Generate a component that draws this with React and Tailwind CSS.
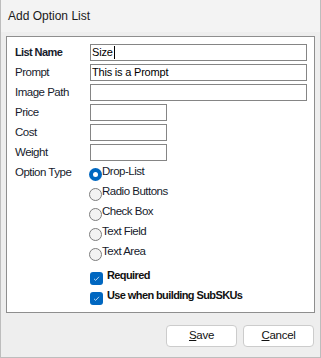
const font = { fontFamily: '"Liberation Sans", Arial, sans-serif' };

function Field({ label, value, wide, strong, cursor }) {
  return (
    <div className="flex h-[20px] items-start">
      <span
        className={`w-[75px] leading-[17px] text-[#161b2c] ${
          strong ? "text-[11px] font-bold tracking-[-0.6px]" : "text-[11.5px] tracking-[-0.5px]"
        }`}
      >
        {label}
      </span>
      <div
        className={`flex h-[17px] items-center border border-[#858585] bg-white pl-[1px] text-[11px] text-black ${
          wide ? "w-[217px]" : "w-[77px]"
        }`}
      >
        <span className="tracking-[-0.2px]">{value}</span>
        {cursor && <span className="ml-[1px] h-[13px] w-[1px] bg-black" />}
      </div>
    </div>
  );
}

function Radio({ label, checked }) {
  return (
    <div className="flex h-[20px] items-start">
      {checked ? (
        <span className="mt-[4px] grid h-[13px] w-[13px] place-items-center rounded-full bg-[#0067c0]">
          <span className="h-[5px] w-[5px] rounded-full bg-white" />
        </span>
      ) : (
        <span className="mt-[4px] h-[13px] w-[13px] rounded-full border border-[#7d7d7d] bg-[#f2f2f2]" />
      )}
      <span className="text-[11.5px] leading-[15px] tracking-[-0.5px] text-[#161b2c]">{label}</span>
    </div>
  );
}

function Check({ label }) {
  return (
    <div className="flex h-[20px] items-start">
      <span className="mt-[1px] grid h-[13px] w-[13px] place-items-center rounded-[3px] bg-[#0067c0]">
        <svg width="9" height="9" viewBox="0 0 9 9">
          <path d="M2 4.8 L3.7 6.4 L7 2.8" fill="none" stroke="#cfe3f5" strokeWidth="0.9" />
        </svg>
      </span>
      <span className="ml-[4px] text-[11px] font-bold leading-[9px] tracking-[-0.6px] text-[#111]">
        {label}
      </span>
    </div>
  );
}

export default function App() {
  return (
    <div
      className="flex h-[358px] w-[321px] flex-col border-x border-b border-[#bdbdbd] bg-[#eeeeee]"
      style={font}
    >
      <div className="flex h-[32px] items-center bg-[#f3f3f3] pl-[7px] text-[12px] text-[#1a1a1a]">
        Add Option List
      </div>
      <div className="ml-[5px] mt-[4px] h-[277px] w-[309px] border border-[#8e8e8e] bg-white pl-[8px] pt-[7px]">
        <Field label="List Name" value="Size" wide strong cursor />
        <Field label="Prompt" value="This is a Prompt" wide />
        <Field label="Image Path" value="" wide />
        <Field label="Price" value="" />
        <Field label="Cost" value="" />
        <Field label="Weight" value="" />
        <div className="flex">
          <span className="w-[74px] pt-[1px] text-[11.5px] leading-[15px] tracking-[-0.5px] text-[#161b2c]">
            Option Type
          </span>
          <div className="flex flex-col">
            <Radio label="Drop-List" checked />
            <Radio label="Radio Buttons" />
            <Radio label="Check Box" />
            <Radio label="Text Field" />
            <Radio label="Text Area" />
            <div className="mt-[7px] pl-[1px]">
              <Check label="Required" />
              <Check label="Use when building SubSKUs" />
            </div>
          </div>
        </div>
      </div>
      <div className="mr-[6px] mt-[12px] flex justify-end gap-[6px]">
        <button className="h-[22px] w-[71px] rounded-[4px] border border-[#cccccc] bg-white text-[11.5px] tracking-[-0.3px] text-[#111]">
          <span className="underline">S</span>ave
        </button>
        <button className="h-[22px] w-[71px] rounded-[4px] border border-[#cccccc] bg-white text-[11.5px] tracking-[-0.3px] text-[#111]">
          <span className="underline">C</span>ancel
        </button>
      </div>
    </div>
  );
}
